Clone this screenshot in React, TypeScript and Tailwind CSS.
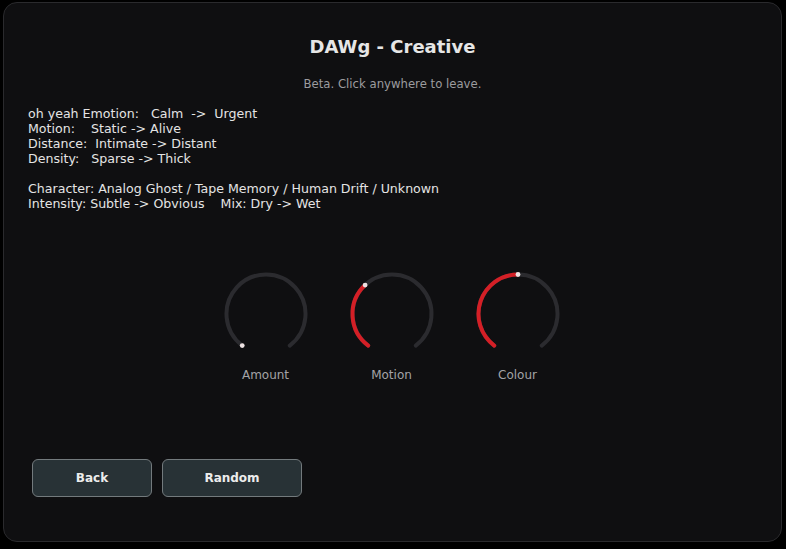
import React from 'react'

const START = -143
const END = 143

function polar(cx: number, cy: number, r: number, deg: number) {
  const a = (deg * Math.PI) / 180
  return { x: cx + r * Math.sin(a), y: cy - r * Math.cos(a) }
}

function arcPath(cx: number, cy: number, r: number, from: number, to: number) {
  const p0 = polar(cx, cy, r, from)
  const p1 = polar(cx, cy, r, to)
  const large = to - from > 180 ? 1 : 0
  return `M ${p0.x} ${p0.y} A ${r} ${r} 0 ${large} 1 ${p1.x} ${p1.y}`
}

function Knob({ label, value }: { label: string; value: number }) {
  const angle = START + (END - START) * value
  const dot = polar(45, 45, 39.5, angle)
  return (
    <div className="flex flex-col items-center">
      <svg width="90" height="90" viewBox="0 0 90 90">
        <path d={arcPath(45, 45, 39.5, START, END)} fill="none" stroke="#2b2b2f" strokeWidth="4" strokeLinecap="round" />
        {value > 0.01 && (
          <path d={arcPath(45, 45, 39.5, START, angle)} fill="none" stroke="#d41f26" strokeWidth="4" strokeLinecap="round" />
        )}
        <circle cx={dot.x} cy={dot.y} r="2.4" fill="#ece2e2" />
      </svg>
      <span className="mt-[8px] text-[12px] leading-[16px] text-[#a3a3a6]">{label}</span>
    </div>
  )
}

const lines = [
  'oh yeah Emotion:   Calm  ->  Urgent',
  'Motion:    Static -> Alive',
  'Distance:  Intimate -> Distant',
  'Density:   Sparse -> Thick',
  '',
  'Character: Analog Ghost / Tape Memory / Human Drift / Unknown',
  'Intensity: Subtle -> Obvious    Mix: Dry -> Wet',
]

export default function App() {
  return (
    <div className="w-[786px] h-[549px] bg-black overflow-hidden font-['DejaVu_Sans',sans-serif]">
      <div className="ml-[3px] mt-[2px] w-[779px] h-[540px] rounded-[14px] border-[1.5px] border-[#2a2a2d] bg-[#0f0f11] flex flex-col">
        <h1 className="mt-[34px] text-center text-[18px] leading-[20px] font-bold text-[#e6e6e6]">DAWg - Creative</h1>
        <p className="mt-[19px] text-center text-[11.7px] leading-[16px] text-[#9c9c9f]">Beta. Click anywhere to leave.</p>
        <div className="mt-[14px] pl-[24px] text-[12.6px] leading-[15px] text-[#e4e4e4] whitespace-pre">
          {lines.map((l, i) => (
            <div key={i} className="h-[15px]">{l}</div>
          ))}
        </div>
        <div className="mt-[58px] flex justify-center gap-[36px] pr-[2px]">
          <Knob label="Amount" value={0} />
          <Knob label="Motion" value={0.35} />
          <Knob label="Colour" value={0.5} />
        </div>
        <div className="mt-[76px] pl-[28px] flex gap-[10px]">
          <button className="w-[120px] h-[38px] rounded-[6px] border border-[#737a7d] bg-[#283236] text-[12px] font-bold text-[#ececec]">Back</button>
          <button className="w-[140px] h-[38px] rounded-[6px] border border-[#737a7d] bg-[#283236] text-[12px] font-bold text-[#ececec]">Random</button>
        </div>
      </div>
    </div>
  )
}
